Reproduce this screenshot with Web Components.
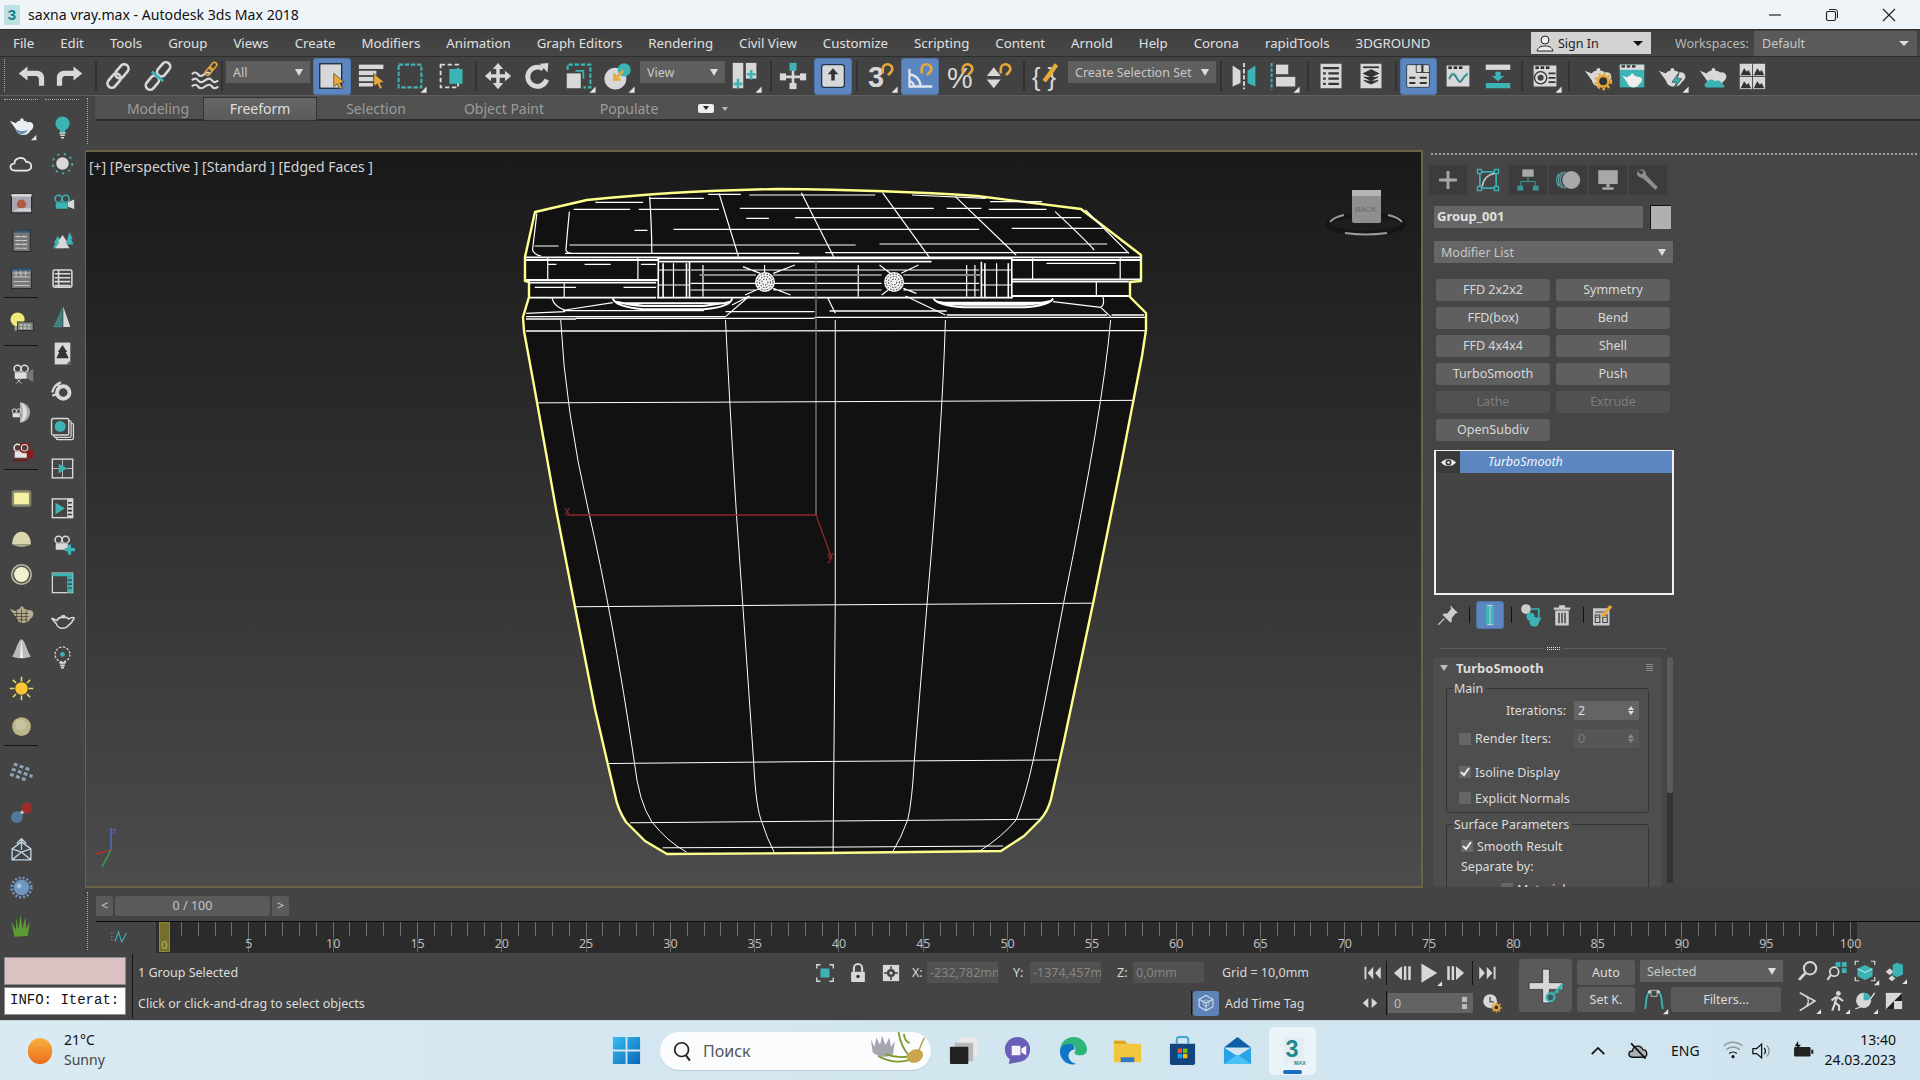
<!DOCTYPE html>
<html>
<head>
<meta charset="utf-8">
<title>saxna vray.max</title>
<style>
  html, body { margin: 0; width: 1920px; height: 1080px; overflow: hidden; background: #444; }
  body { display: flex; flex-direction: column; font: 13px "Noto Sans", "Liberation Sans", sans-serif; color: #d8d8d8; }
  .work { display: flex; height: 856px; flex: none; }
  .center { display: flex; flex-direction: column; flex: 1; min-width: 0; }
  .mid { display: flex; height: 738px; flex: none; }
</style>
</head>
<body>

<title-bar>saxna vray.max - Autodesk 3ds Max 2018</title-bar>

<menu-bar>
  <span>File</span><span>Edit</span><span>Tools</span><span>Group</span><span>Views</span><span>Create</span><span>Modifiers</span><span>Animation</span><span>Graph Editors</span><span>Rendering</span><span>Civil View</span><span>Customize</span><span>Scripting</span><span>Content</span><span>Arnold</span><span>Help</span><span>Corona</span><span>rapidTools</span><span>3DGROUND</span>
</menu-bar>

<main-toolbar></main-toolbar>

<div class="work">
  <left-rail></left-rail>
  <div class="center">
    <ribbon-tabs></ribbon-tabs>
    <div class="mid">
      <viewport-pane></viewport-pane>
      <command-panel></command-panel>
    </div>
    <time-slider></time-slider>
  </div>
</div>

<status-bar></status-bar>
<task-bar></task-bar>

<script>
const L = '#d8d8d8', T = '#3cb4b6', O = '#e9a83a', D = '#2c2c2c';
const magnet = `<path d="M18 13V8a5.5 5.5 0 0 1 11 0c0 3-3 5-5 7" fill="none" stroke="${O}" stroke-width="3"/>`;
const cursor = `<path d="M18 13v15l4-3 3 6 3-1-3-6 5-1z" fill="${O}" stroke="#3a3a3a" stroke-width=".8"/>`;
const pot = (c = L) => `<path fill="${c}" d="M1 10l8 3c1-2 3-3 5-3l1-3h3l1 3c2 0 4 1 5 2 3-1 6 0 7 3s-1 6-4 8c-1 3-4 5-9 5s-8-3-9-7z"/>`;
const bar = (y, c = L, x = 3, w = 26, h = 3) => `<rect x="${x}" y="${y}" width="${w}" height="${h}" fill="${c}"/>`;
const win = (extra, c = L) => `<rect x="3" y="4" width="26" height="24" fill="${c}"/><rect x="5" y="5" width="4" height="3" fill="${D}"/><rect x="11" y="5" width="4" height="3" fill="${D}"/><rect x="17" y="5" width="4" height="3" fill="${D}"/>${extra}`;
const camera = (c, stroke = '#333') => `<circle cx="11" cy="10" r="4.5" fill="none" stroke="${c}" stroke-width="2"/><circle cx="20" cy="10" r="4.5" fill="none" stroke="${c}" stroke-width="2"/><rect x="7" y="14" width="16" height="9" rx="1" fill="${c}" stroke="${stroke}" stroke-width=".5"/>`;
const chain = (c, gap = 0) => `<g fill="none" stroke="${c}" stroke-width="3" transform="rotate(-50 16 16)"><rect x="${0 - gap}" y="11" width="18" height="10" rx="5"/><rect x="${14 + gap}" y="11" width="18" height="10" rx="5"/></g>`;
const mount = (x, y) => `<rect x="${x}" y="${y}" width="14" height="14" fill="${L}"/><path d="M${x + 1} ${y + 13}l4-8 3 4 2-2 3 6z" fill="#333"/>`;

const ICONS = {
  undo: `<path fill="${L}" d="M12 5L2 13l10 8v-5h9c3 0 4 2 4 4v7h6v-9c0-5-4-8-9-8H12z"/>`,
  redo: `<path fill="${L}" transform="matrix(-1 0 0 1 32 0)" d="M12 5L2 13l10 8v-5h9c3 0 4 2 4 4v7h6v-9c0-5-4-8-9-8H12z"/>`,
  link: chain(L),
  unlink: chain(L, 3) + `<path d="M9 11l13 11" stroke="${T}" stroke-width="3"/>`,
  bind: `<g fill="none" stroke="${L}" stroke-width="2.4"><path d="M1 14q4-4 7 0t7 0 7 0"/><path d="M1 21q4-4 7 0t8 0 8 0 7 0"/><path d="M1 28q4-4 7 0t8 0 8 0 7 0"/></g><g transform="translate(14 -1) scale(.55)">${chain(O)}</g>`,
  selbox: `<rect x="2" y="2" width="25" height="28" fill="${L}" stroke="#1c2c44" stroke-width="1.5"/>${cursor}`,
  sellist: bar(3, L, 1, 28, 5) + bar(10, L, 1, 20, 5) + bar(17, L, 1, 17, 5) + bar(24, L, 1, 16, 4) + cursor,
  region: `<rect x="3" y="3" width="26" height="26" fill="none" stroke="${T}" stroke-width="2.4" stroke-dasharray="5 2"/>`,
  crossing: `<rect x="3" y="3" width="20" height="26" fill="none" stroke="${L}" stroke-width="2.2" stroke-dasharray="5 3"/><rect x="13" y="8" width="15" height="17" fill="${T}"/>`,
  move: `<path fill="${L}" d="M16 1l6 7h-4v6h6v-4l7 6-7 6v-4h-6v6h4l-6 7-6-7h4v-6H8v4l-7-6 7-6v4h6V8h-4z"/>`,
  rotate: `<path stroke="${L}" stroke-width="5.5" fill="none" d="M23 8a11 11 0 1 0 4 12"/><path fill="${L}" d="M19 2l10-1-1 11z"/>`,
  scale: `<rect x="2" y="13" width="16" height="17" fill="${L}"/><path d="M3 9V3h26v26h-8" fill="none" stroke="${T}" stroke-width="2.4" stroke-dasharray="5 2"/><path d="M12 10h9v9" fill="none" stroke="${T}" stroke-width="2"/>`,
  place: `<circle cx="13" cy="19" r="12.5" fill="${L}"/><circle cx="23" cy="9" r="7.5" fill="${T}"/><path d="M22 10L12 20m0-7v7h7" stroke="${O}" stroke-width="3" fill="none"/>`,
  pivot: `<rect x="2" y="1" width="12" height="29" fill="${L}"/><rect x="17" y="1" width="12" height="18" fill="${L}"/><path d="M8 19v11M3 25h10M23 9v11M18 14h10" stroke="${T}" stroke-width="3"/>`,
  manip: `<rect x="12" y="1" width="8" height="9" fill="${T}"/><path d="M16 10v20M2 17h28" stroke="${L}" stroke-width="3"/><rect x="1" y="13" width="7" height="8" fill="${L}"/><rect x="24" y="13" width="7" height="8" fill="${L}"/><rect x="12" y="24" width="8" height="7" fill="${L}"/>`,
  kbd: `<rect x="3" y="3" width="26" height="26" rx="3" fill="${L}" stroke="#22344e" stroke-width="1.5"/><path d="M16 7l6 7h-4v7h-4v-7h-4z" fill="#333"/>`,
  snap3: `<text x="1" y="29" font-family="Liberation Sans" font-weight="700" font-size="33" fill="${L}">3</text>` + magnet,
  angle: `<path fill="none" stroke="#dfe6ee" stroke-width="2.6" d="M4 8v20h26M4 14c7 1 12 6 13 14M4 22c2 0 5 2 5 6"/>` + magnet,
  percent: `<text x="0" y="30" font-family="Liberation Sans" font-size="33" fill="${L}">%</text>` + magnet,
  spin: `<path fill="${L}" d="M10 6l8 10H2zM10 30l-8-10h16z"/>` + magnet,
  braces: `<text x="0" y="27" font-family="Liberation Sans" font-size="29" fill="${L}">{ }</text><path d="M14 22L28 3" stroke="${O}" stroke-width="5"/>`,
  mirror: `<path fill="${L}" d="M3 4l9 6v14l-9 4z"/><path fill="${T}" d="M29 4l-9 6v14l9 4z"/><path d="M16 1v30" stroke="${L}" stroke-width="2.2" stroke-dasharray="5 2"/>`,
  align: `<path d="M3 1v31" stroke="${T}" stroke-width="2.2" stroke-dasharray="4 2"/><rect x="8" y="3" width="14" height="11" fill="${L}"/><rect x="8" y="17" width="22" height="11" fill="${L}"/>`,
  table: `<rect x="4" y="2" width="24" height="28" fill="${L}"/><path d="M7 7h18M7 13h3m3 0h12M7 19h3m3 0h12M7 25h3m3 0h12" stroke="#333" stroke-width="2.5"/>`,
  layers: `<rect x="4" y="2" width="24" height="28" fill="${L}"/><path d="M7 6h18" stroke="#333" stroke-width="2"/><path d="M16 9l8 4-8 4-8-4zM8 17l8 4 8-4M8 21l8 4 8-4" fill="#333" stroke="#333" stroke-width="1.5"/>`,
  ribbon: `<rect x="3" y="3" width="26" height="26" rx="2" fill="${L}" stroke="#22344e"/><path d="M14 3v9h15" stroke="#333" fill="none"/><path d="M21 3v9M6 18h7m5 0h8M6 24h7m5 0h8" stroke="#333" stroke-width="2.4"/>`,
  curve: win(`<path d="M6 19q4-10 8-2t6 4 7-8" fill="none" stroke="${T}" stroke-width="2.5"/><path d="M6 20q4-10 8-2t6 4 7-8" fill="none" stroke="#333" stroke-width=".8"/>`),
  sched: bar(3, L, 2, 28, 6) + bar(24, T, 2, 28, 6) + `<path d="M13 11h6v5h4l-7 6-7-6h4z" fill="${T}"/>`,
  mat: win(`<circle cx="11" cy="18" r="7" fill="#ddd" stroke="#333" stroke-width="1.5"/><circle cx="11" cy="18" r="3.5" fill="#444"/><path d="M20 13h8M20 18h8M20 23h8" stroke="#333" stroke-width="2"/>`),
  rsetup: pot() + `<circle cx="22" cy="22" r="6" fill="#333" stroke="${O}" stroke-width="3"/><circle cx="22" cy="22" r="9" fill="none" stroke="${O}" stroke-width="2.4" stroke-dasharray="3 3"/>`,
  rframe: `<rect x="2" y="3" width="28" height="26" fill="${T}"/><rect x="2" y="3" width="28" height="6" fill="${L}"/><path d="M4 5h4M10 5h4M16 5h4" stroke="#333" stroke-width="2.5"/><g transform="translate(4 8) scale(.75)">${pot('#eee')}</g>`,
  rprod: pot() + `<path d="M24 12l-8 11h5l-3 8 9-12h-5z" fill="${T}" stroke="#333" stroke-width=".8"/>`,
  rcloud: pot() + `<path d="M9 29c-3 0-4-5 0-6 1-4 7-4 9-1 4-2 8 0 8 3 3 0 4 4 2 4z" fill="${T}"/>`,
  a360: mount(2, 2) + mount(17, 2) + mount(2, 17) + mount(17, 17),

  potb: `<g>${pot('#e8eef4')}<path d="M8 20c1 4 4 7 8 7s7-3 8-6c-5 3-11 3-16-1z" fill="#6a8db0"/></g>`,
  bulb: `<circle cx="16" cy="11" r="9" fill="${T}"/><path d="M12 18h8l-1 4h-6z" fill="${T}"/><path d="M12 23h8M13 26h6M14 29h4" stroke="${L}" stroke-width="2"/>`,
  cloud: `<path d="M8 25c-8 0-8-9-1-9 0-8 12-10 15-2 8-1 9 11 1 11z" fill="none" stroke="#e6eef4" stroke-width="2.2"/>`,
  sunt: `<circle cx="16" cy="16" r="8" fill="${L}"/><g stroke="${T}" stroke-width="2.2" stroke-dasharray="3 5.6"><circle cx="16" cy="16" r="12.5" fill="none"/></g>`,
  rwin: `<rect x="3" y="4" width="26" height="24" fill="#a8a8b2" stroke="#1a1a1a" stroke-width="1.2"/><rect x="3" y="4" width="26" height="3" fill="#ddd"/><circle cx="16" cy="17" r="6" fill="#b25a48"/><path d="M5 26l8-4h14l2 4z" fill="#d0d0d6"/>`,
  pwin: `<rect x="5" y="3" width="22" height="27" fill="#777" stroke="#1a1a1a"/><rect x="5" y="3" width="22" height="3" fill="#32567e"/><path d="M8 11h16M8 16h16M8 21h16M8 26h16" stroke="#ccc" stroke-width="1.4" stroke-dasharray="7 1 7"/>`,
  pwin2: `<rect x="3" y="3" width="26" height="26" fill="#777" stroke="#1a1a1a"/><rect x="3" y="3" width="26" height="3" fill="#32567e"/><path d="M5 9h22M5 14h22M9 6v8M15 6v8M21 6v8M6 20h20M6 25h20" stroke="#ccc" stroke-width="1.2"/>`,
  bulby: `<circle cx="11" cy="11" r="9" fill="#efe87a"/><path d="M7 19h8v6H7z" fill="#999"/><rect x="11" y="14" width="20" height="11" fill="#7f8a7c" stroke="#222"/><path d="M14 18h14M14 22h14" stroke="#ddd" stroke-dasharray="3 2" stroke-width="1.6"/>`,
  camw: camera('#ddd', '#222') + `<path d="M23 15l8-5v17l-8-5z" fill="#777"/><path d="M9 22l7 7m0-7l-7 7" stroke="#ddd"/>`,
  moon: `<path d="M14 3a13 13 0 0 1 0 26z" fill="#aaa"/><path d="M14 3a13 13 0 0 1 9 13 13 13 0 0 1-9 13c5-3 5-23 0-26z" fill="#ddd"/><g transform="translate(0 8) scale(.62)">${camera('#e0e0e0', '#111')}</g>`,
  camr: `<g>${camera('#e4e4e4', '#7c1616')}<circle cx="20" cy="10" r="6" fill="none" stroke="#8c1a1a" stroke-width="2.2"/><path d="M23 15l8-3v12l-8-2z" fill="#8c1a1a"/><path d="M5 26h20" stroke="#7c1616" stroke-width="2"/></g>`,
  recty: `<rect x="5" y="7" width="22" height="18" rx="2" fill="#f7f1a6" stroke="#8a8a70" stroke-width="3"/>`,
  dome: `<path d="M4 25c0-22 24-22 24 0z" fill="#d9d7ad"/><path d="M4 25c8 4 16 4 24 0z" fill="#a8a888"/>`,
  disk: `<circle cx="16" cy="16" r="12.5" fill="#55554a" stroke="#b5b5a0" stroke-width="2"/><circle cx="16" cy="16" r="9.5" fill="#f2f0cf"/>`,
  potm: `<g>${pot('#b8ad8c')}</g><path d="M5 16l20 0M5 20h20M7 24h17M10 12v16M16 10v18M22 12v16" stroke="#333" stroke-width=".9"/>`,
  cone: `<path d="M16 3c4 0 7 15 12 22-6 3-18 3-24 0 5-7 8-22 12-22z" fill="#bbb"/><path d="M16 3l-2 24h4z" fill="#eee"/>`,
  suny: `<circle cx="16" cy="16" r="8" fill="#fbc631"/><g stroke="#e8d86a" stroke-width="2"><path d="M16 1v6M16 25v6M1 16h6M25 16h6M5 5l4 4M23 23l4 4M27 5l-4 4M5 27l4-4"/></g>`,
  sph: `<circle cx="16" cy="16" r="12" fill="#bcb689"/><circle cx="15" cy="14" r="7" fill="#c9c3a0"/>`,
  parts: `<g fill="#8fa3b8" transform="rotate(20 16 16)"><rect x="3" y="7" width="5" height="4"/><rect x="11" y="7" width="5" height="4"/><rect x="19" y="7" width="5" height="4"/><rect x="3" y="14" width="5" height="4"/><rect x="11" y="14" width="5" height="4"/><rect x="19" y="14" width="5" height="4"/><rect x="27" y="14" width="4" height="4"/><rect x="3" y="21" width="5" height="4"/><rect x="11" y="21" width="5" height="4"/><rect x="19" y="21" width="5" height="4"/></g>`,
  joint: `<path d="M11 21L22 11" stroke="#ccc" stroke-width="4"/><circle cx="10" cy="22" r="7.5" fill="#4f7a9e"/><circle cx="23" cy="10" r="7" fill="#9c2e28"/>`,
  env: `<path d="M4 28V14L16 5l12 9v14zM16 1v14M10 7l6-6 6 6M4 28l12-10 12 10M4 14l12 4 12-4" fill="none" stroke="#bcd4e4" stroke-width="1.7"/>`,
  gear: `<circle cx="16" cy="16" r="10" fill="#6f97c0"/><circle cx="16" cy="16" r="12.5" fill="none" stroke="#6f97c0" stroke-width="3.5" stroke-dasharray="2.5 2.5"/><circle cx="13" cy="14" r="3" fill="#a8c4dc"/>`,
  grass: `<path d="M7 29L3 10l6 10 0-16 3 15 3-19 2 19 4-15 1 15 5-10-3 19z" fill="#5c9a34"/>`,
  camt: `<g>${camera(T, '#333')}<path d="M23 14l8-3v12l-8-3z" fill="${L}"/></g>`,
  trees: `<path d="M10 10l5 9h-2l3 7H4l3-7H5zM25 5l4 9h-2l3 7h-10z" fill="${T}"/><path d="M16 9l6 9h-2l5 8H7l5-8h-2z" fill="${L}"/>`,
  tbl2: `<rect x="4" y="5" width="24" height="22" rx="2" fill="none" stroke="${L}" stroke-width="2"/><path d="M11 5v22M6 10h20M6 15h20M6 20h20M6 25h20" stroke="${L}" stroke-width="2"/>`,
  treet: `<path d="M17 2l9 26h-9z" fill="${L}"/><path d="M16 4L5 28h11z" fill="${T}" opacity=".55"/><path d="M16 4L5 28h11" fill="none" stroke="${T}" stroke-dasharray="1 2" stroke-width="1.6"/>`,
  treed: `<rect x="6" y="2" width="20" height="28" fill="${L}"/><path d="M16 5l6 9h-2l4 8H8l4-8h-2z" fill="#333"/><path d="M26 30l-5 0 5-5z" fill="#555"/>`,
  swirl: `<circle cx="17" cy="16" r="8" fill="none" stroke="${L}" stroke-width="5"/><path d="M3 16c1-6 5-11 11-13M3 20l6-2M9 5c3 2 3 3 3 4" stroke="${L}" stroke-width="3" fill="none"/>`,
  photos: `<rect x="8" y="8" width="22" height="21" rx="2" fill="none" stroke="${L}" stroke-width="1.6"/><rect x="5" y="5" width="22" height="21" rx="2" fill="#444" stroke="${L}" stroke-width="1.6"/><rect x="2" y="2" width="22" height="21" rx="2" fill="#444" stroke="${L}" stroke-width="1.8"/><circle cx="13" cy="12" r="7" fill="${T}"/>`,
  split: `<rect x="3" y="4" width="26" height="24" fill="none" stroke="${L}" stroke-width="1.8"/><path d="M16 4v24M3 16h26" stroke="${L}"/><path d="M11 10l11 6-11 6z" fill="${T}"/>`,
  film: `<rect x="3" y="5" width="26" height="24" fill="none" stroke="${L}" stroke-width="1.8"/><rect x="22" y="5" width="7" height="24" fill="${L}"/><path d="M7 10l12 7-12 8z" fill="${T}"/><path d="M23 10h5M23 15h5M23 20h5M23 25h5" stroke="#333" stroke-width="2"/>`,
  camp: `<g>${camera(L, '#333')}</g><path d="M25 16v13M19 22.500h13" stroke="${T}" stroke-width="4"/>`,
  winp: `<rect x="3" y="4" width="26" height="25" fill="none" stroke="${L}" stroke-width="1.6"/><rect x="3" y="4" width="26" height="4" fill="${T}"/><rect x="22" y="8" width="7" height="21" fill="${T}"/><path d="M23 13h5M23 18h5M23 23h5" stroke="#333" stroke-width="1.5"/>`,
  pott: `<path fill="none" stroke="${L}" stroke-width="2" d="M2 13l7 3c1-3 4-4 6-4h5c2 0 3 1 4 2 3-2 6-2 7-1-2 4-4 7-7 9-2 3-5 4-8 4s-7-2-8-6z"/><path d="M14 12l1-3h4l1 3" fill="${L}"/>`,
  bulbd: `<circle cx="16" cy="12" r="9.5" fill="none" stroke="${L}" stroke-width="1.6" stroke-dasharray="3 2"/><circle cx="16" cy="12" r="3" fill="${T}"/><path d="M12 23h8M13 26h6M14 29h4" stroke="${L}" stroke-width="2.2"/>`,

  plus: `<path d="M16 5v22M5 16h22" stroke="#a8a8a8" stroke-width="3.5"/>`,
  modify: `<rect x="6" y="6" width="20" height="20" fill="none" stroke="${T}" stroke-width="2"/><g fill="#444" stroke="${T}" stroke-width="1.6"><rect x="3" y="3" width="5" height="5"/><rect x="24" y="3" width="5" height="5"/><rect x="3" y="24" width="5" height="5"/><rect x="24" y="24" width="5" height="5"/></g><path d="M9 24C10 15 16 9 24 8" stroke="#c8c8c8" stroke-width="2" fill="none"/>`,
  hier: `<rect x="9" y="3" width="14" height="9" fill="#a8a8a8"/><path d="M16 12v6M7 23v-5h18v5" stroke="${T}" fill="none"/><rect x="3" y="23" width="7" height="6" fill="${T}" opacity=".75"/><rect x="22" y="23" width="7" height="6" fill="${T}" opacity=".75"/>`,
  motion: `<circle cx="20" cy="16" r="11" fill="#a8a8a8"/><path d="M13 6a11 11 0 0 0 0 20M9 6a13 13 0 0 0 0 20M5 8a12 12 0 0 0 0 16" fill="none" stroke="#5a9a9c" stroke-width="1.6"/>`,
  display: `<rect x="4" y="4" width="24" height="17" fill="#a8a8a8"/><rect x="14" y="21" width="4" height="4" fill="#a8a8a8"/><rect x="9" y="25" width="14" height="3" fill="#a8a8a8"/>`,
  wrench: `<path d="M5 4c3-2 7-1 8 3l1 3 14 15-3 3-15-14-3-1c-4-1-5-4-4-8l4 4 3-1 0-3z" fill="#8f8f8f"/>`,
  eye: `<path d="M2 16c7-9 21-9 28 0-7 9-21 9-28 0z" fill="#eee"/><circle cx="16" cy="16" r="5.5" fill="#333"/><circle cx="16" cy="16" r="2.5" fill="#eee"/>`,
  pin: `<path d="M19 3l10 10-3 1-5 6 0 5-2 1-10-10 1-2h5l5-6z" fill="#ccc"/><path d="M11 21l-8 8" stroke="#ccc" stroke-width="1.5"/>`,
  stack: `<rect x="10" y="2" width="5" height="28" fill="${T}"/><rect x="17" y="2" width="5" height="28" fill="${T}"/><path d="M12 2h8M12 30h8M16 2v28" stroke="#d8e8f0" stroke-width="1.2"/>`,
  unique: `<circle cx="8" cy="8" r="6.5" fill="#ccc"/><circle cx="19" cy="25" r="6.5" fill="${T}"/><circle cx="14" cy="18" r="5.5" fill="${T}"/><path d="M14 8h11v15l-3-3m3 3l3-3" stroke="${T}" stroke-width="2.2" fill="none"/>`,
  trash: `<path d="M7 10h18v20H7zM5 6h22v3H5zM12 3h8v3h-8z" fill="#ccc"/><path d="M12 13v14M16 13v14M20 13v14" stroke="#444" stroke-width="2"/>`,
  config: `<rect x="4" y="7" width="22" height="23" fill="#c8c8c8"/><path d="M7 12h16M7 19h7m3 0h6M7 26h7m3 0h6M7 16h6v10H7zM17 16h6v10h-6z" stroke="#444" stroke-width="1.4" fill="none"/><path d="M16 18L28 4" stroke="${O}" stroke-width="4.500"/>`,

  sellock: `<rect x="10" y="10" width="12" height="12" fill="${T}"/><path d="M5 10V5h5M22 5h5v5M27 22v5h-5M10 27H5v-5" fill="none" stroke="${L}" stroke-width="1.8"/>`,
  lock: `<rect x="6" y="14" width="20" height="15" rx="1" fill="${L}"/><path d="M10 14V9a6 6 0 0 1 12 0v5" fill="none" stroke="${L}" stroke-width="3"/><circle cx="16" cy="21" r="2.500" fill="#333"/>`,
  abs: `<rect x="3" y="3" width="26" height="26" fill="${L}"/><circle cx="16" cy="16" r="6.500" fill="#444"/><path d="M16 5v7M16 20v7M5 16h7M20 16h7" stroke="#444" stroke-width="2.5"/><circle cx="16" cy="16" r="2.500" fill="${L}"/>`,
  first: `<path d="M4 6h3v20H4zM18 6v20L9 16zM30 6v20l-9-10z" fill="${L}"/>`,
  prev: `<path d="M16 5v22L3 16zM19 5h4v22h-4zM26 5h4v22h-4z" fill="${L}"/>`,
  play: `<path d="M5 2l23 14L5 30z" fill="${L}"/>`,
  next: `<path d="M16 5v22l13-11zM2 5h4v22H2zM9 5h4v22H9z" fill="${L}"/>`,
  last: `<path d="M2 6l9 10-9 10zM14 6l9 10-9 10zM25 6h3v20h-3z" fill="${L}"/>`,
  keys: `<path d="M13 7v18L3 16zM19 7v18l10-9z" fill="${L}"/>`,
  tconf: `<circle cx="13" cy="13" r="11" fill="${L}"/><path d="M13 6v8h6" stroke="#444" stroke-width="2" fill="none"/><circle cx="23" cy="23" r="4.500" fill="#333" stroke="${O}" stroke-width="3"/><circle cx="23" cy="23" r="7.500" fill="none" stroke="${O}" stroke-width="2" stroke-dasharray="2.500 2.500"/>`,
  bigkey: `<path d="M13 1h6v12h12v6H19v12h-6V19H1v-6h12z" fill="${L}" stroke="#222" stroke-width=".6"/><circle cx="20" cy="26" r="3.500" fill="#3a5a5a" stroke="${T}" stroke-width="2"/><path d="M23 23l8-9m-3 3l2 2m-5 1l2 2" stroke="${T}" stroke-width="2" fill="none"/>`,
  keyfilt: `<path d="M4 28C7 22 3 10 11 4M28 28c-3-6 1-18-7-24" fill="none" stroke="${T}" stroke-width="2.500"/><rect x="12" y="3" width="8" height="8" fill="none" stroke="${L}"/><circle cx="10" cy="5" r="2" fill="${L}"/><circle cx="22" cy="5" r="2" fill="${L}"/>`,
  tag: `<path d="M16 4l11 6v12l-11 6-11-6V10z" fill="none" stroke="#d0dcec" stroke-width="1.800"/><path d="M5 10l11 6 11-6M16 16v12" fill="none" stroke="#d0dcec" stroke-width="1.800"/><circle cx="16" cy="16" r="5" fill="none" stroke="#d0dcec"/>`,
  zoom: `<circle cx="19" cy="12" r="9" fill="none" stroke="${L}" stroke-width="3"/><path d="M12 19L3 29" stroke="${L}" stroke-width="4"/>`,
  zoomall: `<circle cx="12" cy="17" r="6.500" fill="none" stroke="${L}" stroke-width="2.500"/><path d="M7 22l-5 7" stroke="${L}" stroke-width="3"/><g fill="${T}"><rect x="14" y="3" width="7" height="7"/><rect x="23" y="3" width="7" height="7"/><rect x="23" y="12" width="7" height="7"/></g>`,
  zext: `<path d="M16 8l10 5v10l-10 5-10-5V13z" fill="${T}"/><path d="M6 13l10 5 10-5" stroke="#fff" fill="none"/><path d="M3 8V3h5M24 3h5v5M29 24v5h-5M8 29H3v-5" stroke="${L}" fill="none" stroke-width="1.600"/>`,
  zextall: `<path d="M20 4l9 3v14l-9 4-6-3V7z" fill="${T}"/><path d="M10 12l5 5-5 5-6-5zM13 22l5 5-5 4-5-4z" fill="${L}"/>`,
  fov: `<path d="M4 4l22 12L4 30" fill="none" stroke="${L}" stroke-width="2.500"/><path d="M14 9c3 4 3 10 0 15" fill="none" stroke="${L}" stroke-width="2"/>`,
  walk: `<circle cx="18" cy="5" r="3.500" fill="${L}"/><path d="M17 9l-4 9 6 5v7M14 17l-5 13M15 10l-7 5M18 11l7 5" stroke="${L}" stroke-width="3" fill="none"/>`,
  orbit: `<circle cx="14" cy="15" r="11" fill="${L}"/><path d="M14 15V4a11 11 0 0 1 11 11z" fill="${T}"/><path d="M2 27C10 26 24 16 30 4" fill="none" stroke="${L}" stroke-width="2"/>`,
  maxv: `<rect x="3" y="3" width="26" height="26" fill="${L}"/><path d="M29 3L3 29h13V16h13z" fill="#222"/>`,
  curve0: `<path d="M2 9h4M2 15h4M2 21h4" stroke="#ccc" stroke-dasharray="2 1"/><path d="M9 24L15 7l6 18 8-16" fill="none" stroke="${T}" stroke-width="2"/>`,

  sunw: `<defs><linearGradient id="g" x1="0" y1="0" x2="0" y2="1"><stop offset="0" stop-color="#f7b23c"/><stop offset="1" stop-color="#ec6a1c"/></linearGradient></defs><ellipse cx="16" cy="16" rx="13" ry="14" fill="url(#g)"/>`,
  winlogo: `<defs><linearGradient id="w" x1="0" y1="0" x2="1" y2="1"><stop offset="0" stop-color="#35c0f2"/><stop offset="1" stop-color="#0a66b8"/></linearGradient></defs><path d="M1 1h14v14H1zM17 1h14v14H17zM1 17h14v14H1zM17 17h14v14H17z" fill="url(#w)"/>`,
  search: `<circle cx="14" cy="14" r="10" fill="none" stroke="#222" stroke-width="2.500"/><path d="M20 22l6 8" stroke="#222" stroke-width="3"/>`,
  plant: `<path d="M1 10l2 4 1-5 2 4 1-5 2 5 2-4 1 5 2-3-1 7c-3 2-8 2-11-1z" fill="#a6a6b0"/><path d="M5 19c5 3 12 4 17 2M9 18c5 2 9 2 13 1M16 6c1 6 3 10 6 13M22 12c-2-1-3-3-3-5" stroke="#7f9a2c" stroke-width="1" fill="none"/><ellipse cx="25" cy="19" rx="4.500" ry="3.500" fill="#c9a64c" transform="rotate(-25 25 19)"/><path d="M27 16l3-7" stroke="#b8a050" stroke-width=".8"/>`,
  taskview: `<rect x="11" y="2" width="19" height="20" rx="1" fill="#e8e8e8"/><rect x="7" y="8" width="19" height="19" fill="#b9b9b9"/><rect x="2" y="12" width="19" height="18" rx="1" fill="#222"/>`,
  meet: `<path d="M16 2c8 0 13 6 13 13s-5 13-13 13l-9 2 1-5c-3-2-5-6-5-10C3 8 8 2 16 2z" fill="#6a5fb8"/><path d="M10 11h9v10h-9z M20 14l5-3v10l-5-3z" fill="#f4f4f8"/>`,
  edge: `<path d="M2 17C2 7 9 2 16 2c8 0 14 6 14 13 0 4-3 6-7 6-3 0-6-1-6-3 0-1 1-1 1-3 0-3-3-5-6-5-6 0-10 4-10 7z" fill="#2fb57a"/><path d="M2 17c0-5 5-8 9-8 5 0 6 3 6 6-3 0-7 3-6 8 1 4 4 6 8 7-10 2-17-5-17-13z" fill="#0f76c8"/>`,
  folder: `<path d="M2 6h11l3 3h14v19H2z" fill="#f3c640"/><path d="M2 6h11l3 3H2z" fill="#d9a628"/><rect x="9" y="23" width="14" height="5" fill="#2f7bc4"/>`,
  store: `<path d="M3 9h26v19a3 3 0 0 1-3 3H6a3 3 0 0 1-3-3z" fill="#12457e"/><path d="M10 9V5a3 3 0 0 1 3-3h6a3 3 0 0 1 3 3v4" fill="none" stroke="#3fa4d4" stroke-width="2"/><rect x="11" y="14" width="4.500" height="4.500" fill="#f25022"/><rect x="16.500" y="14" width="4.500" height="4.500" fill="#7fba00"/><rect x="11" y="19.500" width="4.500" height="4.500" fill="#00a4ef"/><rect x="16.500" y="19.500" width="4.500" height="4.500" fill="#ffb900"/>`,
  mail: `<path d="M16 2l14 11H2z" fill="#0f5fa8"/><path d="M2 13l14 9 14-9v17H2z" fill="#28a4e6"/><path d="M2 30l14-10 14 10z" fill="#4cc0f2"/>`,
  max3: `<rect x="7" y="3" width="19" height="24" fill="#e4edf0"/><text x="9" y="22" font-family="Liberation Sans" font-weight="700" font-size="22" fill="#1f8a90">3</text><text x="17" y="29" font-family="Liberation Sans" font-size="5" font-weight="700" fill="#1f8a90">MAX</text>`,
  chev: `<path d="M6 21l10-10 10 10" fill="none" stroke="#111" stroke-width="2.800"/>`,
  cloudoff: `<path d="M8 25c-7 0-7-9 0-9 1-8 12-10 15-2 7 0 8 11 1 11z" fill="#aab0b2" stroke="#111" stroke-width="2"/><path d="M6 5l21 22" stroke="#111" stroke-width="2.500"/>`,
  wifi: `<circle cx="16" cy="25" r="2.500" fill="#111"/><path d="M10 20a9 9 0 0 1 12 0" fill="none" stroke="#111" stroke-width="2.200"/><path d="M5 14a16 16 0 0 1 22 0M1 8a22 22 0 0 1 30 0" fill="none" stroke="#8d9aa4" stroke-width="2.200"/>`,
  speaker: `<path d="M3 12h6l8-7v22l-8-7H3z" fill="none" stroke="#111" stroke-width="2"/><path d="M21 11a7 7 0 0 1 0 10" stroke="#111" stroke-width="2" fill="none"/><path d="M25 7a12 12 0 0 1 0 18" stroke="#888" stroke-width="2" fill="none"/>`,
  battery: `<rect x="3" y="10" width="24" height="14" rx="2" fill="#222"/><rect x="28" y="14" width="3" height="6" fill="#222"/><path d="M9 1L4 9h4l-2 6 7-8H9z" fill="#111"/>`
};

class ToolIcon extends HTMLElement {
  connectedCallback() {
    const size = this.getAttribute('size') || 28;
    const name = this.getAttribute('name');
    const fly = this.hasAttribute('fly') ? '<path d="M35 35h-7l7-7z" fill="#e4e4e4"/>' : '';
    this.attachShadow({ mode: 'open' });
    this.shadowRoot.innerHTML = `
      <style>
        :host { display: inline-flex; align-items: center; justify-content: center; flex: none; border-radius: 4px; }
        :host([on]) { background: #5b86c0; box-shadow: inset 0 0 0 1px #4f74a8; height: 37px; }
        svg { display: block; overflow: visible; }
      </style>
      <svg width="${size}" height="${size}" viewBox="0 0 32 32">${ICONS[name] || ''}${fly}</svg>`;
  }
}

// row or column of items placed by their distance from the previous one
class PlaceRow extends HTMLElement {
  connectedCallback() {
    this.attachShadow({ mode: 'open' });
    const col = this.hasAttribute('col');
    this.shadowRoot.innerHTML = `<style>
      :host { display: flex; flex-direction: ${col ? 'column' : 'row'}; align-items: center; }
    </style><slot></slot>`;
    let pos = +this.getAttribute('origin') || 0;
    for (const el of this.children) {
      const at = +el.getAttribute('at');
      const w = +el.getAttribute('w') || 30;
      el.style.flex = 'none';
      el.style[col ? 'height' : 'width'] = w + 'px';
      el.style[col ? 'marginTop' : 'marginLeft'] = (at - pos) + 'px';
      pos = at + w;
    }
  }
}

class TitleBar extends HTMLElement {
  constructor() {
    super();
    this.attachShadow({ mode: 'open' });
    this.shadowRoot.innerHTML = `
      <style>
        :host { display: flex; align-items: center; height: 29px; flex: none; background: #eff4f9; color: #111; font: 14.1px "Noto Sans", sans-serif; }
        .logo { width: 16px; height: 20px; margin: 0 8px 0 4px; background: #bfe0e2; color: #14808a; font: bold 15px/19px "Liberation Sans", sans-serif; text-align: center; }
        .t { flex: 1; }
        .btn { display: flex; width: 57px; justify-content: center; }
        .last { margin-right: 3px; }
      </style>
      <div class="logo">3</div>
      <div class="t"><slot></slot></div>
      <div class="btn"><svg width="14" height="14"><path d="M1 7h12" stroke="#222" stroke-width="1.200"/></svg></div>
      <div class="btn"><svg width="14" height="14"><rect x="1.500" y="3.500" width="9" height="9" rx="1.500" fill="none" stroke="#222" stroke-width="1.200"/><path d="M4 1.500h6a2.500 2.500 0 0 1 2.500 2.500v6" fill="none" stroke="#222"/></svg></div>
      <div class="btn last"><svg width="14" height="14"><path d="M1 1l12 12M13 1L1 13" stroke="#222" stroke-width="1.200"/></svg></div>`;
  }
}

class MenuBar extends HTMLElement {
  constructor() {
    super();
    this.attachShadow({ mode: 'open' });
    this.shadowRoot.innerHTML = `
      <style>
        :host { display: flex; align-items: center; height: 27px; box-sizing: border-box; flex: none; background: linear-gradient(#404040, #474747); border-top: 1px solid #2e2e2e; color: #e0e0e0; font: 13.250px "Noto Sans", sans-serif; }
        .menus { display: flex; gap: 26px; padding-left: 13px; flex: 1; }
        .sign { display: flex; align-items: center; width: 120px; height: 22px; background: #d2d2d2; color: #222; font-size: 12.500px; box-sizing: border-box; padding: 0 8px 0 5px; }
        .sign span { flex: 1; margin-left: 4px; }
        .arrow { width: 0; height: 0; border: 5px solid transparent; border-top: 5px solid #111; border-bottom: 0; }
        .ws { margin-left: 24px; color: #b9b9b9; font-size: 12.500px; width: 79px; }
        .drop { display: flex; align-items: center; width: 163px; height: 25px; margin-right: 3px; background: #5a5a5a; color: #c8c8c8; font-size: 12.500px; box-sizing: border-box; padding: 0 8px; }
        .drop span { flex: 1; }
        .drop .arrow { border-top-color: #ddd; }
      </style>
      <div class="menus"><slot></slot></div>
      <div class="sign"><svg width="18" height="18" viewBox="0 0 18 18"><circle cx="9" cy="6" r="4" fill="#eee" stroke="#222"/><path d="M1 17c1-4 4-5 8-5s7 1 8 5z" fill="#eee" stroke="#222"/></svg><span>Sign In</span><div class="arrow"></div></div>
      <div class="ws">Workspaces:</div>
      <div class="drop"><span>Default</span><div class="arrow"></div></div>`;
  }
}

class DropBox extends HTMLElement {
  constructor() {
    super();
    this.attachShadow({ mode: 'open' });
    this.shadowRoot.innerHTML = `
      <style>
        :host { display: flex; align-items: center; box-sizing: border-box; height: 22px; padding: 0 7px 0 7px; background: #5f5f5f; color: #c8c8c8; font: 12.500px "Noto Sans", sans-serif; white-space: nowrap; }
        .l { flex: 1; overflow: hidden; }
        .arrow { width: 0; height: 0; border: 4.500px solid transparent; border-top: 7px solid #ddd; border-bottom: 0; }
      </style>
      <div class="l"><slot></slot></div><div class="arrow"></div>`;
  }
}

class MainToolbar extends HTMLElement {
  constructor() {
    super();
    this.attachShadow({ mode: 'open' });
    const items = [
      ['undo', 31], ['redo', 70], ['|', 95], ['link', 118], ['unlink', 158], ['bind', 205], ['|', 221],
      ['#All', 226, 84], ['selbox', 332, 38, 'on'], ['sellist', 372], ['region', 410, 0, 'fly'], ['crossing', 452], ['|', 475],
      ['move', 498], ['rotate', 537], ['scale', 579, 0, 'fly'], ['place', 618, 0, 'fly'], ['#View', 640, 85],
      ['pivot', 745, 0, 'fly'], ['|', 770], ['manip', 793], ['kbd', 833, 38, 'on'], ['|', 856],
      ['snap3', 881, 0, 'fly'], ['angle', 920, 38, 'on'], ['percent', 961], ['spin', 999], ['|', 1023],
      ['braces', 1046], ['#Create Selection Set', 1068, 148], ['|', 1220], ['mirror', 1244], ['align', 1283, 0, 'fly'], ['|', 1307],
      ['table', 1331], ['layers', 1371], ['|', 1395], ['ribbon', 1418, 37, 'on'], ['curve', 1458], ['sched', 1498], ['|', 1521],
      ['mat', 1545, 0, 'fly'], ['|', 1568], ['rsetup', 1598], ['rframe', 1632], ['rprod', 1672, 0, 'fly'], ['rcloud', 1713], ['a360', 1752]
    ];
    let html = '';
    for (const [n, at, w, flag] of items) {
      if (n === '|') html += `<i at="${at}" w="2"></i>`;
      else if (n[0] === '#') html += `<drop-box at="${at}" w="${w}" style="align-self:flex-start;margin-top:4px">${n.slice(1)}</drop-box>`;
      else { const bw = w || 30; html += `<tool-icon name="${n}" at="${at - bw / 2}" w="${bw}" ${flag || ''}></tool-icon>`; }
    }
    this.shadowRoot.innerHTML = `
      <style>
        :host { display: block; height: 40px; flex: none; background: #424242; border-top: 1px solid #2e2e2e; border-bottom: 1px solid #5f5f5f; box-sizing: border-box; }
        place-row { height: 38px; }
        i { display: block; height: 30px; width: 2px; background: #222; transform: scaleX(.5); }
        .grip { position: absolute; left: 4px; top: 59px; height: 33px; border-left: 1px dotted #aaa; }
      </style>
      <div class="grip"></div>
      <place-row origin="0">${html}</place-row>`;
  }
}

class RibbonTabs extends HTMLElement {
  constructor() {
    super();
    this.attachShadow({ mode: 'open' });
    this.shadowRoot.innerHTML = `
      <style>
        :host { display: block; height: 54px; flex: none; box-sizing: border-box; padding-left: 10px; position: relative; }
        .bar { display: flex; align-items: center; height: 25px; box-sizing: border-box; padding-top: 2px; background: #505050; border-bottom: 2px solid #2c2c2c; border-radius: 0 0 0 2px; color: #9c9c9c; font: 14px "Noto Sans", sans-serif; }
        .tab { text-align: center; flex: none; box-sizing: border-box; }
        .on { background: linear-gradient(#666, #5a5a5a); color: #dedede; box-shadow: 0 0 0 1px #333; height: 22px; line-height: 21px; }
        .chip { width: 16px; height: 9px; background: #eee; border-radius: 2px; position: relative; }
        .chip::after { content: ""; position: absolute; left: 5px; top: 2px; border: 3px solid transparent; border-top: 4px solid #222; border-bottom: 0; }
        .tri { margin-left: 8px; border: 3px solid transparent; border-top: 4px solid #bbb; border-bottom: 0; }
        .v { position: absolute; left: 2px; top: 2px; height: 46px; border-left: 1px dotted #aaa; }
      </style>
      <div class="v"></div>
      <div class="bar">
        <div class="tab" style="width:109px;padding-left:17px">Modeling</div>
        <div class="tab on" style="width:112px">Freeform</div>
        <div class="tab" style="width:120px">Selection</div>
        <div class="tab" style="width:136px">Object Paint</div>
        <div class="tab" style="width:114px">Populate</div>
        <div class="chip" style="margin-left:12px"></div><div class="tri"></div>
      </div>`;
  }
}

class LeftRail extends HTMLElement {
  constructor() {
    super();
    this.attachShadow({ mode: 'open' });
    const left = [['potb', 125, 'fly'], ['cloud', 163], ['rwin', 203], ['pwin', 240], ['pwin2', 278], ['-', 297], ['bulby', 323], ['-', 345], ['camw', 373], ['moon', 412], ['camr', 452], ['-', 469], ['recty', 498], ['dome', 537], ['disk', 574], ['potm', 613], ['cone', 649], ['suny', 688], ['sph', 726], ['-', 745], ['parts', 772], ['joint', 812], ['env', 850], ['gear', 887], ['grass', 926]];
    const right = [['bulb', 127], ['sunt', 163], ['camt', 203], ['trees', 240], ['tbl2', 278], ['treet', 317], ['treed', 353], ['swirl', 392], ['photos', 429], ['split', 468], ['film', 507], ['camp', 544], ['winp', 582], ['pott', 620], ['bulbd', 657]];
    const col = list => list.map(([n, y, f]) => n === '-' ? `<hr at="${y - 96}" w="1">` : `<tool-icon name="${n}" size="25" at="${y - 96 - 15}" w="30" ${f || ''}></tool-icon>`).join('');
    this.shadowRoot.innerHTML = `
      <style>
        :host { display: flex; flex: none; width: 85px; box-sizing: border-box; padding-left: 4px; position: relative; background: #444; }
        place-row { width: 34px; }
        place-row + place-row { margin-left: 7px; }
        hr { width: 34px; margin: 0; border: 0; background: #151515; flex: none; }
        tool-icon { width: 30px; }
        .dots { position: absolute; top: 3px; height: 1px; border-top: 1px dotted #aaa; }
      </style>
      <div class="dots" style="left:4px;width:34px"></div>
      <div class="dots" style="left:45px;width:34px"></div>
      <place-row col origin="0">${col(left)}</place-row>
      <place-row col origin="0">${col(right)}</place-row>`;
  }
}

class ViewportPane extends HTMLElement {
  constructor() {
    super();
    this.attachShadow({ mode: 'open' });
    this.shadowRoot.innerHTML = `
      <style>
        :host { display: block; flex: none; width: 1338px; height: 738px; position: relative; box-sizing: border-box; border: 2px solid #6c6347; border-left-width: 1px; background: linear-gradient(#191919, #2c2c2c 40%, #4c4c4c); overflow: hidden; }
        svg { display: block; position: absolute; left: -1px; top: -2px; }
        .lbl { position: absolute; left: 3px; top: 5px; color: #d4d4d4; font: 14px "Noto Sans", sans-serif; white-space: nowrap; }
        path { vector-effect: non-scaling-stroke; }
        .w path { fill: none; stroke: #fff; }
      </style>
      <svg width="1338" height="738" viewBox="85 150 1338 738">
        <path fill="#111" stroke="#ffff8e" stroke-width="2.400" stroke-linejoin="round" d="M535 212L587 200Q673 191 777 189Q890 190 977 196L1081 209L1141 255V281L1130 282V297L1146 313V330L1142 356L1120 470L1094 599L1064 741L1051 799Q1048 811 1040 820L1024 836L1001 851L825 853L667 854L645 841L626 822Q618 810 615 795L595 709L574 602L556 509L535 391L524 331L523 317L529 297V282L525 281V257z"/>
        <g class="w" transform="translate(500 170) scale(.4337 .3333)" stroke-width="1.200">
          <path d="M220 97H330M345 85H470M480 73H555M575 75H865M950 75L1120 85M1130 95H1250M170 118H300M320 118H505M553 115H1000M1030 115H1110M1127 118H1260M568 145H620M680 143H1340M400 178H1105M1180 175H1390M310 181H340M160 225H820M875 222H1400M80 228H135M150 250H690M750 248H1450"/>
          <path d="M345 80Q350 170 350 250M505 70L550 260M695 68L770 262M882 68L990 262M1050 80L1190 255M160 125Q155 190 152 240Q155 250 165 250M1280 125Q1350 210 1370 240M85 130L75 240Q80 255 95 258M1350 120L1450 250"/>
          <path stroke-width="1.800" d="M60 262H1478M60 270H365M60 330H365M1180 328H1478M1180 270H1478M362 265H1182M365 275H995M362 383H1182M65 338H360M68 383H360M1180 335H1450M1180 378H1450"/>
          <path d="M110 262V330M318 262V330M1228 265V330M1430 262V330M195 283H255M325 283H360M110 283H130M1260 280H1420M148 340V383M1375 335V380M80 352H175M285 352H360"/>
          <path stroke-width="1.600" d="M365 265V385M376 280V385M430 280V385M437 275V385M1110 275V385M1118 280V385M1172 280V385M1180 265V385"/>
          <path d="M365 300H437M365 345H437M1110 300H1180M1110 345H1180M400 280V385M1145 280V385M468 285V380M826 285V380M1076 285V380M1095 285V380"/>
          <path d="M440 300H1105M440 340H590M630 340H880M930 340H1105M440 360H590M630 360H880M930 360H1105M560 290L600 310M680 285L630 310M610 285V310M875 285L900 310M965 285L925 310M565 375L600 355M670 375L630 355M880 375L900 355M960 370L930 355"/>
          <path style="stroke:#888" stroke-width="2" d="M460 315H590M630 315H880M930 315H1110"/>
          <path stroke-width="2" d="M260 385Q265 410 330 418H470Q535 410 535 385M268 395Q300 405 330 408H470Q510 402 530 395M280 400H520M1000 385Q1005 405 1070 412H1210Q1270 405 1275 385M1008 395Q1040 402 1070 404H1210Q1250 400 1270 393M1020 398H1260"/>
          <path d="M120 385Q125 410 150 420L260 398M535 405L575 378M520 440L575 378M755 382L773 430M935 378L1027 435M1275 395L1385 412Q1395 405 1390 380M1385 412L1408 440"/>
          <path stroke-width="1.300" d="M60 430L150 425M145 422H470M520 425H725M760 423H1030M1030 435H1400M1410 435H1485M60 440H520M60 447H175M175 445H725M725 442H1490M60 483H350L955 482H1490"/>
        </g>
        <path d="M816 260V515" stroke="#7e7e7e" stroke-width="1.300"/>
        <g class="w" transform="translate(500 320) scale(.4337 .3571)">
          <path d="M140 0Q150 250 205 540T310 1240Q320 1350 350 1405Q385 1460 430 1490"/>
          <path d="M520 0Q530 250 545 540Q560 800 585 1240Q590 1370 605 1410Q615 1450 632 1490"/>
          <path d="M773 0V800L768 1490"/>
          <path d="M1027 0Q1020 300 985 790L955 1240Q950 1350 940 1400Q925 1450 905 1490"/>
          <path d="M1408 0Q1390 250 1300 790Q1260 1050 1230 1230Q1210 1340 1190 1400Q1160 1445 1105 1488"/>
          <path d="M85 232L520 230 1460 225M175 803L720 798 1365 793M250 1242L770 1236 1285 1232M300 1408L770 1403 1245 1398M375 1478L770 1476 1160 1473"/>
        </g>
        <g fill="#f4f4f4">
          <circle cx="765" cy="282" r="10"/><circle cx="894" cy="282" r="10"/>
        </g>
        <g fill="none" stroke="#222" stroke-dasharray="1.500 1.500">
          <circle cx="765" cy="282" r="8"/><circle cx="765" cy="282" r="5.500"/><circle cx="765" cy="282" r="3"/><circle cx="894" cy="282" r="8"/><circle cx="894" cy="282" r="5.500"/><circle cx="894" cy="282" r="3"/>
        </g>
        <path d="M567 515H816L832 559" fill="none" stroke="#8c2a2a" stroke-width="1.300"/>
        <text x="564" y="515" font-family="Liberation Sans" font-size="12" fill="#8c2a2a">x</text>
        <text x="827" y="560" font-family="Liberation Sans" font-size="12" fill="#8c2a2a">y</text>
        <g>
          <ellipse cx="1366" cy="224" rx="38" ry="9" fill="none" stroke="#151515" stroke-width="5"/>
          <path d="M1330 222q4-5 14-7M1402 222q-4-5-14-7M1345 233q20 3 42 0" fill="none" stroke="#9a9a9a" stroke-width="2"/>
          <rect x="1352" y="190" width="29" height="33" rx="2" fill="#8f8f8f"/>
          <rect x="1352" y="190" width="29" height="6" fill="#b4b4b4"/>
          <text x="1366" y="212" font-family="Liberation Sans" font-size="8" text-anchor="middle" fill="#6a6a6a">BACK</text>
        </g>
        <path d="M111 850V828" fill="none" stroke-width="1.500" stroke="#4d6fc0"/>
        <path d="M111 850l-16 4" stroke="#b03030" stroke-width="1.500"/>
        <path d="M111 850l-9 17" stroke="#3aa04a" stroke-width="1.500"/>
        <text x="112" y="834" font-family="Liberation Sans" font-size="9" fill="#4d6fc0">z</text>
      </svg>
      <div class="lbl">[+] [Perspective ] [Standard ] [Edged Faces ]</div>`;
  }
}

class ModButton extends HTMLElement {
  constructor() {
    super();
    this.attachShadow({ mode: 'open' });
    this.shadowRoot.innerHTML = `
      <style>
        :host { display: block; height: 22px; line-height: 21px; text-align: center; background: #5f5f5f; border-radius: 3px; color: #d8d8d8; font: 12.500px/21px "Noto Sans", sans-serif; }
        :host([off]) { background: #515151; color: #7c7c7c; }
      </style><slot></slot>`;
  }
}

class SpinField extends HTMLElement {
  constructor() {
    super();
    this.attachShadow({ mode: 'open' });
    this.shadowRoot.innerHTML = `
      <style>
        :host { display: flex; align-items: center; box-sizing: border-box; width: 65px; height: 19px; padding: 0 5px 0 4px; background: #646464; color: #dcdcdc; font: 12.500px "Noto Sans", sans-serif; }
        :host([off]) { background: #565656; color: #7c7c7c; }
        span { flex: 1; }
        b { display: block; width: 0; height: 0; margin: 1px 0; border: 3px solid transparent; }
        .u { border-bottom: 4px solid #ddd; border-top: 0; }
        .d { border-top: 4px solid #ddd; border-bottom: 0; }
        :host([off]) .u { border-bottom-color: #888; }
        :host([off]) .d { border-top-color: #888; }
      </style>
      <span><slot></slot></span><div><b class="u"></b><b class="d"></b></div>`;
  }
}

class CheckRow extends HTMLElement {
  constructor() {
    super();
    this.attachShadow({ mode: 'open' });
    const mark = this.hasAttribute('checked') ? '<svg width="12" height="12" viewBox="0 0 12 12"><path d="M2 6l3 3 5-7" fill="none" stroke="#eee" stroke-width="2"/></svg>' : '';
    this.shadowRoot.innerHTML = `
      <style>
        :host { display: flex; align-items: center; gap: 4px; font: 12.500px "Noto Sans", sans-serif; color: #dcdcdc; white-space: nowrap; }
        .box { display: flex; align-items: center; justify-content: center; width: 12px; height: 12px; background: #666; }
      </style>
      <div class="box">${mark}</div><slot></slot>`;
  }
}

class GroupBox extends HTMLElement {
  constructor() {
    super();
    this.attachShadow({ mode: 'open' });
    this.shadowRoot.innerHTML = `
      <style>
        :host { display: block; position: relative; box-sizing: border-box; margin: 0 0 0 13px; width: 203px; border: 1px solid #343434; border-radius: 3px; }
        .lbl { position: absolute; left: 6px; top: -9px; padding: 0 3px 0 1px; background: #4e4e4e; color: #dcdcdc; font: 12.500px/17px "Noto Sans", sans-serif; }
      </style>
      <div class="lbl">${this.getAttribute('label')}</div><slot></slot>`;
  }
}

class CommandPanel extends HTMLElement {
  constructor() {
    super();
    this.attachShadow({ mode: 'open' });
    const tabs = ['plus', 'modify', 'hier', 'motion', 'display', 'wrench'];
    this.shadowRoot.innerHTML = `
      <style>
        :host { display: block; flex: 1; box-sizing: border-box; padding: 3px 3px 0 5px; background: #454545; color: #dcdcdc; font: 12.500px "Noto Sans", sans-serif; }
        .dots { height: 2px; border-top: 2px dotted #a0a0a0; margin-left: 3px; }
        .tabs { display: flex; gap: 2px; margin: 8px 0 0 1px; height: 30px; }
        .tab { display: flex; width: 38px; height: 30px; align-items: center; justify-content: center; background: #3c3c3c; border-radius: 2px 2px 0 0; }
        .tab.on { background: #454545; }
        .name { display: flex; margin: 10px 0 0 6px; height: 24px; gap: 7px; }
        .field { width: 209px; height: 22px; margin-top: 1px; box-sizing: border-box; padding-left: 3px; background: #666; font: bold 13px/21px "Noto Sans", sans-serif; color: #e0e0e0; }
        .swatch { width: 21px; height: 24px; box-sizing: border-box; background: #b0b0b0; border-top: 1px solid #111; border-left: 1px solid #111; }
        drop-box { width: 239px; margin: 12px 0 0 6px; background: #666; }
        .mods { display: grid; grid-template-columns: 114px 114px; gap: 6px; margin: 16px 0 0 8px; }
        .stack { box-sizing: border-box; width: 240px; height: 145px; margin: 9px 0 0 6px; border: 2px solid #f0f0f0; border-top-width: 1px; background: #444; }
        .sel { display: flex; height: 22px; }
        .eye { display: flex; width: 24px; align-items: center; justify-content: center; background: #3a3a3a; }
        .blue { flex: 1; background: #5b86c0; color: #f0f4fa; font-style: italic; line-height: 21px; padding-left: 28px; }
        .tools { height: 28px; margin-top: 6px; }
        .tools i { display: block; width: 1px; height: 16px; background: #111; }
        .div { display: flex; align-items: center; gap: 3px; margin: 18px 0 0 12px; width: 226px; height: 3px; }
        .div u { flex: 1; height: 1px; background: #5e5e5e; }
        .div s { width: 13px; height: 3px; border-top: 1px dotted #ddd; border-bottom: 1px dotted #ddd; box-sizing: border-box; }
        .low { display: flex; margin: 7px 0 0 5px; height: 230px; gap: 5px; }
        .roll { width: 229px; height: 230px; overflow: hidden; background: #4e4e4e; box-shadow: inset 0 0 0 1px #4a4a4a; }
        .head { display: flex; align-items: center; height: 22px; padding-left: 7px; font: bold 13px "Noto Sans", sans-serif; position: relative; }
        .tri { margin-right: 8px; border: 4px solid transparent; border-top: 6px solid #bbb; border-bottom: 0; }
        .grip { position: absolute; right: 9px; top: 7px; width: 7px; height: 7px; background: repeating-linear-gradient(#8a8a8a 0 1px, transparent 1px 2px); }
        .bar { width: 6px; height: 226px; background: #333; border-radius: 2px; }
        .bar div { height: 136px; background: #5a5a5a; border-radius: 2px; }
        .r { display: flex; align-items: center; }
        .main { height: 125px; margin-top: 9px; }
        .surf { height: 80px; margin-top: 11px; }
      </style>
      <div class="dots"></div>
      <div class="tabs">${tabs.map(n => `<div class="tab ${n === 'modify' ? 'on' : ''}"><tool-icon name="${n}" size="26"></tool-icon></div>`).join('')}</div>
      <div class="name"><div class="field">Group_001</div><div class="swatch"></div></div>
      <drop-box>Modifier List</drop-box>
      <div class="mods">
        <mod-button>FFD 2x2x2</mod-button><mod-button>Symmetry</mod-button>
        <mod-button>FFD(box)</mod-button><mod-button>Bend</mod-button>
        <mod-button>FFD 4x4x4</mod-button><mod-button>Shell</mod-button>
        <mod-button>TurboSmooth</mod-button><mod-button>Push</mod-button>
        <mod-button off>Lathe</mod-button><mod-button off>Extrude</mod-button>
        <mod-button>OpenSubdiv</mod-button>
      </div>
      <div class="stack">
        <div class="sel"><div class="eye"><tool-icon name="eye" size="17"></tool-icon></div><div class="blue">TurboSmooth</div></div>
      </div>
      <place-row class="tools" origin="1428">
        <tool-icon name="pin" size="24" at="1434" w="28"></tool-icon>
        <i at="1469" w="1"></i>
        <tool-icon name="stack" size="22" at="1476" w="28" on style="height:28px"></tool-icon>
        <i at="1511" w="1"></i>
        <tool-icon name="unique" size="24" at="1518" w="28"></tool-icon>
        <tool-icon name="trash" size="24" at="1548" w="28"></tool-icon>
        <i at="1583" w="1"></i>
        <tool-icon name="config" size="24" at="1588" w="28"></tool-icon>
      </place-row>
      <div class="div"><u></u><s></s><u></u></div>
      <div class="low">
        <div class="roll">
          <div class="head"><div class="tri"></div>TurboSmooth<div class="grip"></div></div>
          <group-box label="Main" class="main">
            <div class="r" style="margin-top:12px;height:19px"><div style="width:119px;text-align:right">Iterations:</div><spin-field style="margin-left:8px">2</spin-field></div>
            <div class="r" style="margin-top:9px;height:19px;padding-left:12px"><check-row style="width:115px">Render Iters:</check-row><spin-field off>0</spin-field></div>
            <check-row checked style="margin:15px 0 0 12px;height:18px">Isoline Display</check-row>
            <check-row style="margin:8px 0 0 12px;height:18px">Explicit Normals</check-row>
          </group-box>
          <group-box label="Surface Parameters" class="surf">
            <check-row checked style="margin:12px 0 0 14px;height:18px">Smooth Result</check-row>
            <div style="margin:3px 0 0 14px;height:18px;line-height:18px">Separate by:</div>
            <check-row style="margin:4px 0 0 54px;height:18px">Material</check-row>
          </group-box>
        </div>
        <div class="bar"><div></div></div>
      </div>`;
  }
}

class TimeSlider extends HTMLElement {
  constructor() {
    super();
    this.attachShadow({ mode: 'open' });
    let labels = '';
    for (let i = 0; i <= 100; i += 5) labels += `<span>${i === 0 ? '' : i}</span>`;
    this.shadowRoot.innerHTML = `
      <style>
        :host { display: block; height: 64px; flex: none; box-sizing: border-box; position: relative; padding: 8px 0 0 11px; background: #444; font: 12.500px "Noto Sans", sans-serif; color: #bdbdbd; }
        .grip { position: absolute; left: 2px; top: 4px; height: 58px; border-left: 1px dotted #aaa; }
        .top { display: flex; height: 20px; gap: 2px; align-items: stretch; }
        .b { width: 17px; text-align: center; background: #5a5a5a; line-height: 19px; border-radius: 2px; color: #ccc; }
        .track { width: 155px; text-align: center; background: #5a5a5a; line-height: 19px; border-radius: 3px; color: #c4c4c4; }
        .ruler { position: relative; height: 31px; margin-top: 5px; border-top: 1px solid #0c0c0c; background: linear-gradient(to right, transparent 60px, #2b2b2b 60px 1761px, transparent 1761px); }
        .ticks { position: absolute; left: 68px; width: 1688px; top: 0; height: 14px; background: repeating-linear-gradient(to right, #6f6f6f 0 1px, transparent 1px 16.860px); }
        .major { position: absolute; left: 68px; width: 1688px; top: 0; height: 30px; background: repeating-linear-gradient(to right, #646464 0 1px, transparent 1px 84.300px); }
        .nums { display: flex; position: absolute; left: 26.500px; top: 12px; line-height: 20px; }
        .nums span { width: 84.300px; text-align: center; flex: none; }
        .head { position: absolute; left: 63px; top: 0; width: 11px; height: 30px; background: #77702c; border: 1px solid #8f8a34; box-sizing: border-box; color: #b5b16a; text-align: center; line-height: 44px; font-size: 11px; }
        tool-icon { position: absolute; left: 14px; top: 6px; }
      </style>
      <div class="grip"></div>
      <div class="top"><div class="b">&lt;</div><div class="track">0 / 100</div><div class="b">&gt;</div></div>
      <div class="ruler">
        <tool-icon name="curve0" size="18"></tool-icon>
        <div class="major"></div><div class="ticks"></div>
        <div class="nums">${labels}</div>
        <div class="head">0</div>
      </div>`;
  }
}

class StatusBar extends HTMLElement {
  constructor() {
    super();
    this.attachShadow({ mode: 'open' });
    this.shadowRoot.innerHTML = `
      <style>
        :host { display: flex; height: 68px; flex: none; box-sizing: border-box; background: #444; font: 12.500px "Noto Sans", sans-serif; color: #dcdcdc; }
        .msg { width: 122px; margin: 5px 0 0 4px; }
        .pink { height: 28px; box-sizing: border-box; background: #dbc1c1; border: 1px solid #8c8c8c; }
        .info { height: 28px; margin-top: 2px; box-sizing: border-box; background: #fff; border: 1px solid #8c8c8c; color: #111; font: 14px/24px "Liberation Mono", monospace; padding-left: 5px; white-space: pre; overflow: hidden; }
        .vr { width: 1px; height: 64px; margin: 2px 0 0 6px; background: #151515; }
        .prompt { width: 632px; padding: 12px 0 0 5px; }
        .prompt div { height: 31px; }
        .rows { display: flex; flex-direction: column; flex: none; }
        place-row { height: 34px; }
        .c { height: 21px; box-sizing: border-box; background: #515151; color: #858585; padding-left: 3px; line-height: 21px; overflow: hidden; white-space: nowrap; }
        .k { color: #d8d8d8; }
        i { display: block; width: 1px; height: 24px; background: #151515; }
        .btn { text-align: center; background: #5a5a5a; border-radius: 3px; line-height: 25px; height: 25px; }
        .f { height: 20px; display: flex; align-items: center; box-sizing: border-box; padding: 0 6px; background: #636363; color: #bbb; justify-content: space-between; }
        .f u { width: 5px; height: 12px; background: linear-gradient(#bbb 40%, transparent 40% 60%, #bbb 60%); text-decoration: none; }
        .big { width: 53px; height: 53px; margin: 7px 0 0 0; flex: none; background: #5a5a5a; border-radius: 4px; display: flex; align-items: center; justify-content: center; }
        .tagb { background: #5d82b6; border-radius: 3px; height: 25px; }
      </style>
      <div class="msg"><div class="pink"></div><div class="info">INFO: Iterat:</div></div>
      <div class="vr"></div>
      <div class="prompt"><div>1 Group Selected</div><div style="white-space:nowrap">Click or click-and-drag to select objects</div></div>
      <div class="rows" style="width:749px">
        <place-row origin="770" style="margin-top:10px;height:21px">
          <tool-icon name="sellock" size="24" at="810" w="30"></tool-icon>
          <tool-icon name="lock" size="22" at="843" w="30"></tool-icon>
          <tool-icon name="abs" size="20" at="876" w="30"></tool-icon>
          <span class="k" at="912" w="15">X:</span><div class="c" at="927" w="71">-232,782mm</div>
          <span class="k" at="1013" w="17">Y:</span><div class="c" at="1030" w="71">-1374,457mm</div>
          <span class="k" at="1117" w="16">Z:</span><div class="c" at="1133" w="71">0,0mm</div>
          <span class="k" at="1222" w="90">Grid = 10,0mm</span>
          <tool-icon name="first" size="20" at="1362" w="20"></tool-icon><i at="1386" w="1"></i>
          <tool-icon name="prev" size="20" at="1392" w="20"></tool-icon>
          <tool-icon name="play" size="22" fly at="1418" w="22"></tool-icon>
          <tool-icon name="next" size="20" at="1446" w="20"></tool-icon><i at="1472" w="1"></i>
          <tool-icon name="last" size="20" at="1478" w="20"></tool-icon>
        </place-row>
        <place-row origin="770" style="margin-top:7px;height:26px">
          <i at="1191" w="1"></i><tool-icon name="tag" size="20" class="tagb" at="1193" w="26"></tool-icon>
          <span class="k" at="1225" w="90" style="white-space:nowrap">Add Time Tag</span>
          <tool-icon name="keys" size="18" at="1360" w="20"></tool-icon><i at="1386" w="1"></i>
          <div class="f" at="1388" w="85"><span>0</span><u></u></div>
          <tool-icon name="tconf" size="20" at="1482" w="20"></tool-icon>
        </place-row>
      </div>
      <div class="big"><tool-icon name="bigkey" size="36"></tool-icon></div>
      <div class="rows" style="width:206px">
        <place-row origin="1572" style="margin-top:8px;height:25px">
          <div class="btn" at="1577" w="58">Auto</div>
          <drop-box at="1640" w="143" style="height:22px;align-self:flex-start">Selected</drop-box>
        </place-row>
        <place-row origin="1572" style="margin-top:2px;height:25px">
          <div class="btn" at="1577" w="58">Set K.</div>
          <tool-icon name="keyfilt" size="24" fly at="1642" w="24"></tool-icon>
          <div class="btn" at="1671" w="110">Filters...</div>
        </place-row>
      </div>
      <div class="rows" style="width:135px">
        <place-row origin="1778" style="margin-top:4px;height:30px">
          <tool-icon name="zoom" size="22" at="1795" w="26"></tool-icon>
          <tool-icon name="zoomall" size="22" at="1824" w="26"></tool-icon>
          <tool-icon name="zext" size="24" fly at="1852" w="26"></tool-icon>
          <tool-icon name="zextall" size="22" fly at="1881" w="26"></tool-icon>
        </place-row>
        <place-row origin="1778" style="height:30px">
          <tool-icon name="fov" size="22" fly at="1795" w="26"></tool-icon>
          <tool-icon name="walk" size="22" fly at="1824" w="26"></tool-icon>
          <tool-icon name="orbit" size="22" fly at="1852" w="26"></tool-icon>
          <tool-icon name="maxv" size="20" at="1881" w="26"></tool-icon>
        </place-row>
      </div>`;
  }
}

class TaskBar extends HTMLElement {
  constructor() {
    super();
    this.attachShadow({ mode: 'open' });
    this.shadowRoot.innerHTML = `
      <style>
        :host { display: block; height: 60px; flex: none; background: linear-gradient(to right, #d9eaf3, #d2e6f0 50%, #cfe4ee); border-top: 1px solid #c6d6de; box-sizing: border-box; color: #111; font: 14px "Noto Sans", sans-serif; }
        place-row { height: 59px; }
        .w { line-height: 20px; font-size: 14px; margin-top: -2px; }
        .w small { display: block; font-size: 14px; color: #444; }
        .pill { display: flex; align-items: center; height: 38px; background: #fafcfd; border-radius: 19px; box-shadow: 0 1px 1px #b8ccd8; }
        .pill span { margin-left: 9px; font-size: 16px; color: #555; flex: 1; }
        .tile { display: flex; align-items: center; justify-content: center; height: 48px; background: #eaf3f8; border-radius: 5px; position: relative; }
        .tile::after { content: ""; position: absolute; bottom: 1px; left: 14px; width: 19px; height: 4px; border-radius: 2px; background: #1a6fc0; }
        .clock { text-align: right; line-height: 20px; margin-top: -2px; }
      </style>
      <place-row origin="0">
        <tool-icon name="sunw" size="30" at="25" w="30"></tool-icon>
        <div class="w" at="64" w="60">21°C<small>Sunny</small></div>
        <tool-icon name="winlogo" size="29" at="612" w="29"></tool-icon>
        <div class="pill" at="660" w="271">
          <tool-icon name="search" size="22" style="margin-left:12px"></tool-icon><span>Поиск</span>
          <tool-icon name="plant" size="59" style="margin-right:3px"></tool-icon>
        </div>
        <tool-icon name="taskview" size="31" at="948" w="31"></tool-icon>
        <tool-icon name="meet" size="31" at="1002" w="31"></tool-icon>
        <tool-icon name="edge" size="31" at="1058" w="31"></tool-icon>
        <tool-icon name="folder" size="31" at="1112" w="31"></tool-icon>
        <tool-icon name="store" size="31" at="1167" w="31"></tool-icon>
        <tool-icon name="mail" size="31" at="1222" w="31"></tool-icon>
        <div class="tile" at="1269" w="47"><tool-icon name="max3" size="34"></tool-icon></div>
        <tool-icon name="chev" size="20" at="1588" w="20"></tool-icon>
        <tool-icon name="cloudoff" size="22" at="1627" w="22"></tool-icon>
        <div at="1671" w="30" style="white-space:nowrap">ENG</div>
        <tool-icon name="wifi" size="20" at="1723" w="20"></tool-icon>
        <tool-icon name="speaker" size="20" at="1751" w="20"></tool-icon>
        <tool-icon name="battery" size="22" at="1792" w="22"></tool-icon>
        <div class="clock" at="1822" w="74">13:40<br>24.03.2023</div>
      </place-row>`;
  }
}

customElements.define('tool-icon', ToolIcon);
customElements.define('place-row', PlaceRow);
customElements.define('title-bar', TitleBar);
customElements.define('menu-bar', MenuBar);
customElements.define('drop-box', DropBox);
customElements.define('main-toolbar', MainToolbar);
customElements.define('ribbon-tabs', RibbonTabs);
customElements.define('left-rail', LeftRail);
customElements.define('viewport-pane', ViewportPane);
customElements.define('mod-button', ModButton);
customElements.define('spin-field', SpinField);
customElements.define('check-row', CheckRow);
customElements.define('group-box', GroupBox);
customElements.define('command-panel', CommandPanel);
customElements.define('time-slider', TimeSlider);
customElements.define('status-bar', StatusBar);
customElements.define('task-bar', TaskBar);
</script>
</body>
</html>
